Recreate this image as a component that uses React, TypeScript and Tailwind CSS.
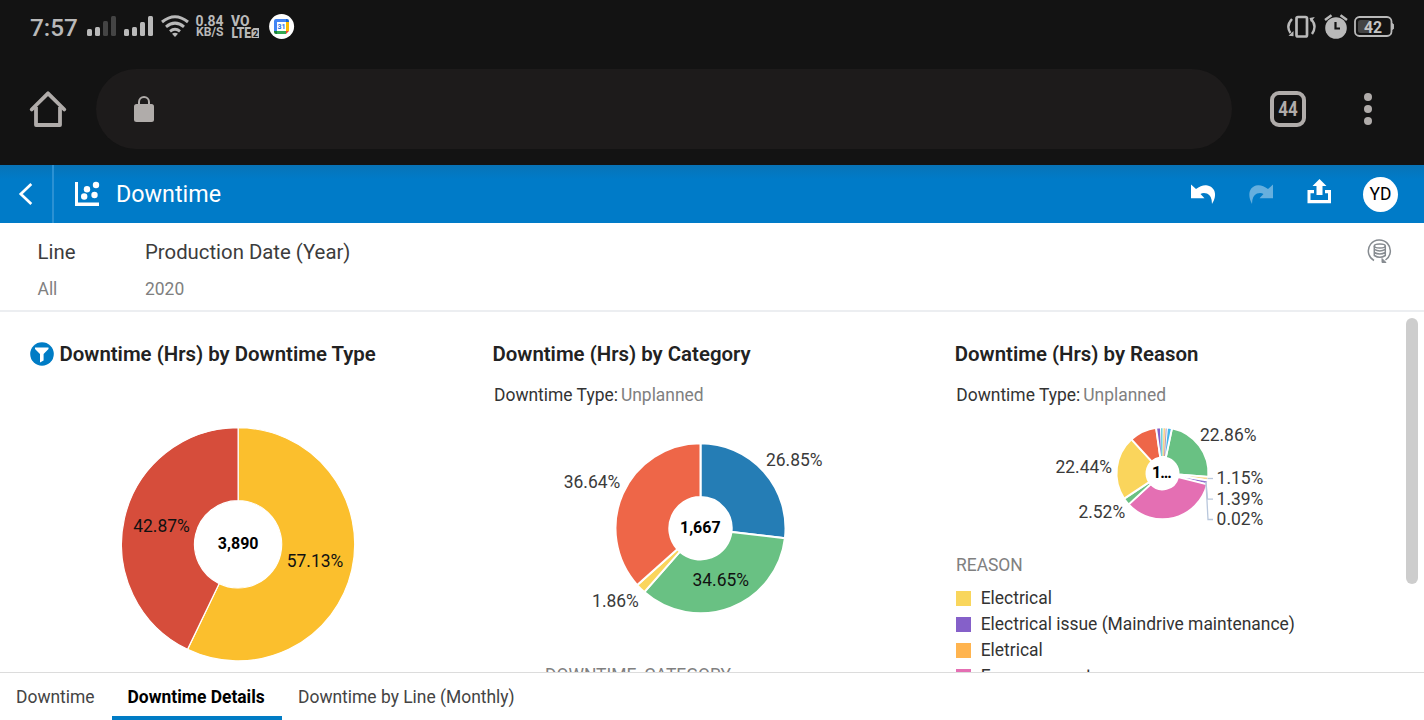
import React from "react";

type Slice = { from: number; to: number; color: string };

function arc(cx: number, cy: number, r: number, ri: number, from: number, to: number) {
  const p = (deg: number, rad: number) => {
    const a = (deg * Math.PI) / 180;
    return `${(cx + rad * Math.sin(a)).toFixed(2)} ${(cy - rad * Math.cos(a)).toFixed(2)}`;
  };
  const big = to - from > 180 ? 1 : 0;
  return `M${p(from, r)}A${r} ${r} 0 ${big} 1 ${p(to, r)}L${p(to, ri)}A${ri} ${ri} 0 ${big} 0 ${p(from, ri)}Z`;
}

function Donut({ cx, cy, r, ri, gap, slices }: { cx: number; cy: number; r: number; ri: number; gap: number; slices: Slice[] }) {
  return (
    <g>
      {slices.map((s) => (
        <path key={s.from} d={arc(cx, cy, r + gap / 2, ri - gap / 2, s.from, s.to)} fill={s.color} stroke="#fff" strokeWidth={gap} />
      ))}
    </g>
  );
}

function Label({ x, y, children, dark }: { x: number; y: number; children: string; dark?: boolean }) {
  return (
    <text x={x} y={y} fontSize="17.45" textAnchor="middle" fill={dark ? "#111" : "#3a3a3a"}>
      {children}
    </text>
  );
}

function StatusBar() {
  return (
    <div className="flex h-[54px] items-center pl-[30px] pr-[30px] text-[#b9b9b9]">
      <span className="w-[57px] pt-[2px] text-[24.300px] leading-none font-medium">7:57</span>
      <svg className="h-[54px] w-[104px]" viewBox="87 0 104 54" fill="#b9b9b9">
        <rect x="87" y="29" width="5" height="7" rx="1.5" />
        <rect x="95" y="27" width="5" height="9" rx="1.5" />
        <rect x="103" y="21" width="5" height="15" rx="1.5" fill="#444" />
        <rect x="111" y="16" width="5" height="20" rx="1.5" fill="#444" />
        <rect x="124" y="29" width="5" height="7" rx="1.5" />
        <rect x="132" y="27" width="5" height="9" rx="1.5" />
        <rect x="140" y="22" width="5" height="14" rx="1.5" />
        <rect x="148" y="16" width="5" height="20" rx="1.5" />
        <g fill="none" stroke="#b9b9b9" strokeWidth="3">
          <path d="M162 22Q175 11.500 188 22" />
          <path d="M166 26.800Q175 19.500 184 26.800" />
          <path d="M170 31.300Q175 27.300 180 31.300" />
        </g>
        <path d="M172 33.800Q175 31.500 178 33.800L175 37Z" />
      </svg>
      <svg className="ml-[4px] h-[54px] w-[66px]" viewBox="195 0 66 54" fill="#b9b9b9" fontWeight="700">
        <text x="195.500" y="26" fontSize="14" fontWeight="700" textLength="28" lengthAdjust="spacingAndGlyphs">0.84</text>
        <text x="196" y="36" fontSize="12.600" textLength="27.500" lengthAdjust="spacingAndGlyphs">KB/S</text>
        <text x="231" y="26" fontSize="14.600" fontWeight="800" textLength="18.500" lengthAdjust="spacingAndGlyphs">VO</text>
        <text x="231.500" y="37.700" fontSize="14.500" fontWeight="900" textLength="19.500" lengthAdjust="spacingAndGlyphs">LTE</text>
        <path d="M253.500 28H259V38H251.500V30Z" />
        <text x="255.400" y="36.700" fontSize="9.500" textAnchor="middle" fill="#131313">2</text>
      </svg>
      <svg className="ml-[8px] h-[26px] w-[26px]" viewBox="0 0 26 26">
        <circle cx="12.600" cy="12.500" r="12.500" fill="#fff" />
        <path d="M5 7Q5 5 7 5H17V8H8V17H5Z" fill="#4285f4" />
        <path d="M17 5H18Q20 5 20 7V8H17Z" fill="#1967d2" />
        <path d="M17 8H20V17H17Z" fill="#fbbc04" />
        <path d="M8 17H17V20H8Z" fill="#34a853" />
        <path d="M5 17H8V20H7Q5 20 5 18Z" fill="#188038" />
        <path d="M17 17H20L17 20Z" fill="#ea4335" />
        <text x="12.600" y="15.300" fontSize="7" fontWeight="700" textAnchor="middle" fill="#1a73e8">31</text>
      </svg>
      <svg className="ml-auto h-[54px] w-[108px]" viewBox="1286 0 108 54" fill="none" stroke="#b9b9b9">
        <rect x="1296.500" y="17" width="10.500" height="19.500" rx="1.500" strokeWidth="2.700" />
        <path d="M1292 19Q1285.500 26 1290.500 33M1311 19Q1317.500 26 1312 34" strokeWidth="2.400" />
        <path d="M1288.500 35.800L1293.500 36.300V31ZM1309.500 18L1314.800 17L1311 22Z" fill="#b9b9b9" stroke="none" />
        <circle cx="1336" cy="28" r="10.800" fill="#b9b9b9" stroke="none" />
        <path d="M1325 20L1331.500 15.200M1347 20L1340.500 15.200" strokeWidth="2.500" />
        <path d="M1335.500 22V28.500H1340" stroke="#131313" strokeWidth="2.200" />
        <rect x="1355" y="17" width="36.500" height="19" rx="4.500" strokeWidth="1.800" />
        <path d="M1392.500 23.500Q1394 24 1394 26.500T1392.500 29.500Z" fill="#b9b9b9" strokeWidth="1" />
        <rect x="1358" y="20" width="13" height="13" rx="2.500" fill="#444" stroke="none" />
        <text x="1373" y="32.800" fontSize="15.800" fontWeight="700" textAnchor="middle" fill="#c4c4c4" stroke="none">42</text>
      </svg>
    </div>
  );
}

function BrowserBar() {
  return (
    <div className="flex h-[111px] items-center pb-[1px] pl-[29px]">
      <svg className="h-[40px] w-[38px]" viewBox="29 89 38 40" fill="none" stroke="#b0acaa" strokeWidth="3.800" strokeLinejoin="round">
        <path d="M31.700 109.500L48 93.300L64.300 109.500" strokeLinecap="round" />
        <path d="M36 107V125H60V107" />
      </svg>
      <div className="ml-[29px] flex h-[80px] w-[1136px] items-center rounded-full bg-[#1d1b1b] pl-[37px]">
        <svg className="h-[28px] w-[22px]" viewBox="133 95 22 28">
          <rect x="134" y="104" width="20" height="18" rx="2.500" fill="#b0acaa" />
          <path d="M139 105V102A5 5 0 0 1 149 102V105" fill="none" stroke="#b0acaa" strokeWidth="2" />
        </svg>
      </div>
      <svg className="ml-[38px] h-[36px] w-[36px]" viewBox="0 0 36 36" fill="#b0acaa">
        <rect x="2" y="2" width="32" height="32" rx="7" fill="none" stroke="#b0acaa" strokeWidth="4" />
        <text x="8.200" y="25.200" fontSize="20" fontWeight="700" textLength="19.500" lengthAdjust="spacingAndGlyphs">44</text>
      </svg>
      <svg className="ml-[58px] h-[34px] w-[8px]" viewBox="0 0 8 34" fill="#b0acaa">
        <circle cx="4" cy="5" r="4" />
        <circle cx="4" cy="17" r="4" />
        <circle cx="4" cy="29" r="4" />
      </svg>
    </div>
  );
}

function AppHeader() {
  return (
    <header className="flex h-[58px] items-center bg-[linear-gradient(to_bottom,#0873b7_0,#007bc8_14px)] text-white">
      <div className="flex h-full w-[54px] items-center border-r-2 border-[#2b91d3] pl-[18px]">
        <svg className="h-[24px] w-[16px]" viewBox="0 0 16 24" fill="none" stroke="#fff" strokeWidth="2.700">
          <path d="M13.300 2L2.800 12L13.300 22" />
        </svg>
      </div>
      <svg className="ml-[21px] h-[26px] w-[26px]" viewBox="75 181 26 26" fill="#fff">
        <path d="M75 182H78V202.500H99V206H75Z" />
        <circle cx="96" cy="185" r="3.200" />
        <circle cx="87" cy="189.300" r="3.200" />
        <circle cx="84.200" cy="196.500" r="3.200" />
        <circle cx="94.500" cy="195" r="3.200" />
      </svg>
      <h1 className="ml-[15px] pt-[1px] text-[23.300px] font-normal">Downtime</h1>
      <svg className="ml-auto h-[58px] w-[172px]" viewBox="1191 165 172 58" fill="#fff">
        <path d="M1191 184.500L1196 189Q1201 185 1206 185.200C1215 186 1218 195 1212 204Q1212 195.500 1207 193.500Q1203 192.300 1200.500 194L1204.500 198.300H1191Z" />
        <path opacity="0.4" d="M1273 184.500L1268 189Q1263 185 1258 185.200C1249 186 1247 195 1252 204Q1252 195.500 1257 193.500Q1261 192.300 1263.500 194L1259.500 198.300H1273Z" />
        <path d="M1319.500 179L1326.500 186H1322.500V195H1316.500V186H1312.500Z" />
        <path d="M1307.500 190H1314V193.200H1310.500V200H1328V193.200H1325V190H1331V203.300H1307.500Z" />
      </svg>
      <div className="mr-[26px] flex h-[35px] w-[35px] items-center justify-center rounded-full bg-white text-[17.450px] text-black">YD</div>
    </header>
  );
}

function Filters() {
  return (
    <section className="flex h-[89px] border-b-2 border-[#eceef1] pl-[37.500px] text-[#3c3c3c]">
      <div className="w-[107.500px] pt-[14px]">
        <div className="text-[20.350px] leading-[30px]">Line</div>
        <div className="pt-[9px] text-[17.450px] leading-[26px] text-[#808080]">All</div>
      </div>
      <div className="pt-[14px]">
        <div className="text-[20.350px] leading-[30px]">Production Date (Year)</div>
        <div className="pt-[9px] text-[17.450px] leading-[26px] text-[#808080]">2020</div>
      </div>
      <svg className="mt-[15px] mr-[31px] ml-auto h-[26px] w-[26px]" viewBox="1367 238 26 26" fill="none" stroke="#868b90" strokeWidth="1.500">
        <path d="M1374 260.500A11 11 0 1 1 1385.500 260" />
        <path d="M1382 258.500V262.500H1386Z" fill="#868b90" strokeWidth="1" />
        <ellipse cx="1379.800" cy="246" rx="5.500" ry="2" />
        <path d="M1374.300 246V255.500Q1379.800 259 1385.300 255.500V246M1374.300 249.300Q1379.800 252.500 1385.300 249.300M1374.300 252.500Q1379.800 255.700 1385.300 252.500" />
      </svg>
    </section>
  );
}

const titleClass = "text-[20.400px] leading-[28px] font-semibold text-[#222]";

function Subtitle() {
  return (
    <div className="mt-[14px] pl-[1.500px] text-[17.450px] leading-[26px] text-[#333]">
      Downtime Type:<span className="ml-[3px] text-[#808080]">Unplanned</span>
    </div>
  );
}

const legend = [
  { name: "Electrical", swatch: "bg-[#f9d65c]" },
  { name: "Electrical issue (Maindrive maintenance)", swatch: "bg-[#8560c9]" },
  { name: "Eletrical", swatch: "bg-[#ffb44f]" },
  { name: "Encrassement", swatch: "bg-[#e46fb3]" },
];

function Charts() {
  return (
    <main className="flex h-[360px] overflow-hidden">
      <section className="w-[462px] shrink-0 pt-[28px]">
        <div className="flex items-center pl-[30px]">
          <svg className="mr-[5.500px] h-[24px] w-[24px]" viewBox="0 0 24 24">
            <circle cx="12" cy="12" r="11.800" fill="#007cc5" />
            <path d="M5 5.500H18.500V7L13.600 12V18.500L10 20.500V12L5 7Z" fill="#fff" />
          </svg>
          <h2 className={titleClass}>Downtime (Hrs) by Downtime Type</h2>
        </div>
        <svg className="h-[292px] w-[462px]" viewBox="0 368 462 292" overflow="visible">
          <Donut cx={238.1} cy={544.3} r={116} ri={44.200} gap={1.200} slices={[{ from: 0, to: 205.700, color: "#fbbf2d" }, { from: 205.700, to: 360, color: "#d64d3b" }]} />
          <Label x={161.500} y={532} dark>42.87%</Label>
          <Label x={315} y={567} dark>57.13%</Label>
          <text x="238.200" y="549" fontSize="16" fontWeight="700" textAnchor="middle">3,890</text>
        </svg>
      </section>
      <section className="w-[462px] shrink-0 pt-[28px] pl-[30.500px]">
        <h2 className={titleClass}>Downtime (Hrs) by Category</h2>
        <Subtitle />
        <svg className="h-[254px] w-[431px]" viewBox="493 408 431 254">
          <Donut cx={700.500} cy={528.300} r={84} ri={32.200} gap={2} slices={[
            { from: 0, to: 96.660, color: "#257db5" },
            { from: 96.660, to: 221.400, color: "#69c183" },
            { from: 221.400, to: 228.100, color: "#fad55c" },
            { from: 228.100, to: 360, color: "#ee6648" },
          ]} />
          <Label x={794.300} y={466}>26.85%</Label>
          <Label x={592} y={488}>36.64%</Label>
          <Label x={615.500} y={607}>1.86%</Label>
          <Label x={720.800} y={586} dark>34.65%</Label>
          <text x="700.300" y="533" fontSize="16" fontWeight="700" textAnchor="middle">1,667</text>
        </svg>
        <div className="ml-[52.500px] text-[17.450px] leading-[26px] text-[#808080]">DOWNTIME_CATEGORY</div>
      </section>
      <section className="w-[450px] shrink-0 pt-[28px] pl-[30.800px]">
        <h2 className={titleClass}>Downtime (Hrs) by Reason</h2>
        <Subtitle />
        <svg className="h-[144px] w-[419px]" viewBox="955 408 419 144">
          <Donut cx={1162.500} cy={473.300} r={45} ri={17} gap={1.900} slices={[
            { from: 12, to: 94.500, color: "#69c183" },
            { from: 94.500, to: 99, color: "#fad58a" },
            { from: 99, to: 104, color: "#9271d0" },
            { from: 104, to: 227.400, color: "#e46fb3" },
            { from: 227.400, to: 236.500, color: "#69c183" },
            { from: 236.500, to: 317.500, color: "#fad55c" },
            { from: 317.500, to: 352, color: "#ee6648" },
            { from: 352, to: 358, color: "#8560c9" },
            { from: 365.800, to: 371.800, color: "#45b5ea" },
          ]} />
          <path d="M1161.800 428.300V456" stroke="#62d0d6" strokeWidth="1.400" />
          <path d="M1164.300 428.300L1163.400 456" stroke="#fad58a" strokeWidth="1.600" />
          <path d="M1166.200 428.500L1164.500 456" stroke="#b796b8" strokeWidth="1" />
          <g fill="none" stroke="#b9c7dc" strokeWidth="1.300">
            <path d="M1207.500 478.500H1213" />
            <path d="M1206 482L1207.500 499.200H1213" />
            <path d="M1206 482L1208 519.500H1213" />
          </g>
          <Label x={1228.200} y={441}>22.86%</Label>
          <Label x={1083.800} y={473}>22.44%</Label>
          <Label x={1101.800} y={518}>2.52%</Label>
          <Label x={1240} y={484}>1.15%</Label>
          <Label x={1240} y={505}>1.39%</Label>
          <Label x={1240} y={525}>0.02%</Label>
          <text x="1162" y="478" fontSize="16" fontWeight="700" textAnchor="middle" textLength="20">1...</text>
        </svg>
        <div className="pl-[1.200px] text-[17.450px] leading-[26px] text-[#808080]">REASON</div>
        <ul className="mt-[7px] pl-[1.200px] text-[17.450px] leading-[26px] text-[#333]">
          {legend.map((l) => (
            <li key={l.name} className="flex items-center">
              <span className={`mt-px mr-[9.700px] h-[15px] w-[15px] ${l.swatch}`} />
              {l.name}
            </li>
          ))}
        </ul>
      </section>
      <div className="flex grow flex-col pt-[6px] pl-[32.300px]">
        <div className="h-[266px] w-[12px] rounded-full bg-[#cdcdcd]" />
      </div>
    </main>
  );
}

function Tabs() {
  return (
    <nav className="flex h-[48px] border-t border-[#dcdcdc] bg-white text-[17.450px] leading-[48px] text-[#444]">
      <div className="w-[112px] pl-[16px]">Downtime</div>
      <div className="w-[170px] border-b-4 border-[#007cc5] pl-[15.500px] font-bold text-black">Downtime Details</div>
      <div className="pl-[16px]">Downtime by Line (Monthly)</div>
    </nav>
  );
}

export default function App() {
  return (
    <div className="flex h-[720px] w-[1424px] flex-col overflow-hidden bg-white font-['Roboto',sans-serif] whitespace-nowrap">
      <div className="bg-[#131313]">
        <StatusBar />
        <BrowserBar />
      </div>
      <AppHeader />
      <Filters />
      <Charts />
      <Tabs />
    </div>
  );
}
